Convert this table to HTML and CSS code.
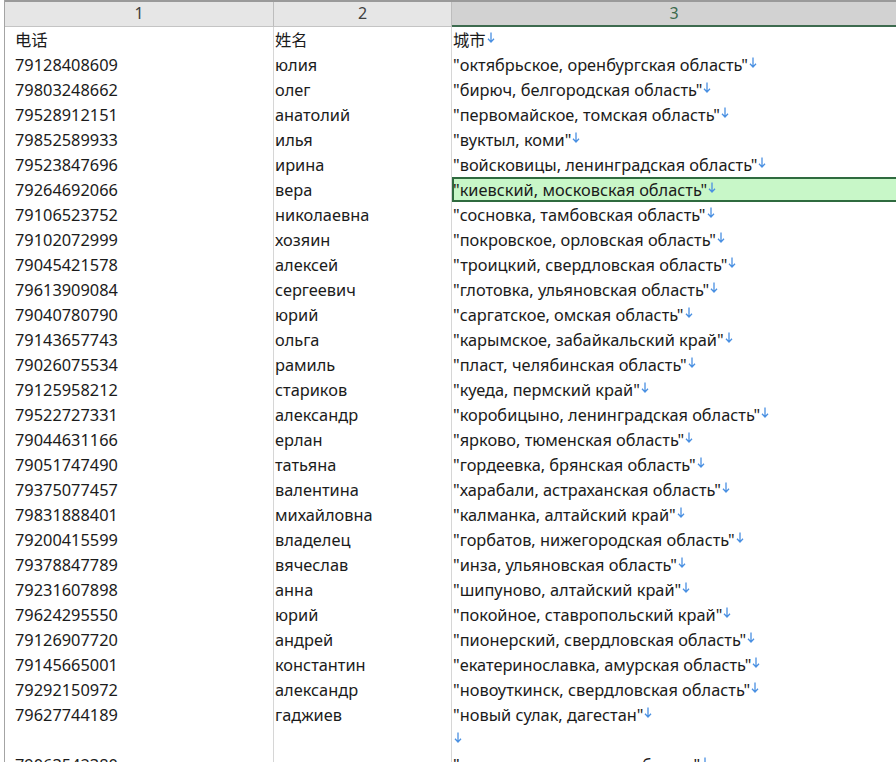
FILE: index.html
```html
<!DOCTYPE html>
<html>
<head>
<meta charset="utf-8">
<link rel="stylesheet" href="styles.css">
</head>
<body>
<div class="sheet">
  <div class="head">
    <div class="hc">1</div>
    <div class="hc">2</div>
    <div class="hc sel">3</div>
  </div>
  <div class="rows" id="rows"></div>
</div>
<script src="app.js"></script>
</body>
</html>
```
FILE: styles.css
```css
html, body {
  margin: 0;
  padding: 0;
  background: #ffffff;
  overflow: hidden;
}
body {
  width: 896px;
  height: 762px;
  font-family: "Noto Sans", "Noto Sans CJK SC", sans-serif;
  font-size: 16.35px;
  color: #1b1b1b;
}
.sheet {
  margin-left: 4px;
  border-left: 1px solid #a4a4a4;
  height: 762px;
}
.head {
  display: grid;
  grid-template-columns: 269px 178px 1fr;
  height: 27px;
  box-sizing: border-box;
  border-top: 2px solid #9a9a9a;
}
.hc {
  background: #e6e6e6;
  border-bottom: 1px solid #c4c4c4;
  border-right: 1px solid #bdbdbd;
  text-align: center;
  line-height: 23px;
  color: #404040;
  font-size: 16px;
}
.hc.sel {
  background: #d2d2d2;
  border-right: none;
  border-bottom: 2px solid #3d6b4f;
  color: #3b6a4c;
}
.row {
  display: grid;
  grid-template-columns: 269px 178px 1fr;
  height: 25px;
}
.c {
  white-space: nowrap;
  overflow: hidden;
  box-sizing: border-box;
  height: 25px;
  padding-top: 1px;
  line-height: 24px;
  padding-left: 1px;
  border-right: 1px solid #d6d6d6;
}
.c1 {
  padding-left: 10px;
}
.c3 {
  border-right: none;
}
.c3.active {
  background: #c8f7c8;
  box-shadow: inset 0 2px 0 #2f6b3f, inset 0 -2px 0 #2f6b3f, inset 2px 0 0 #2f6b3f;
}
.nl {
  width: 8px;
  height: 11px;
  vertical-align: 3px;
  margin-left: 1px;
}
.nl path {
  stroke: #4a90e2;
  stroke-width: 1.3;
  fill: none;
}
```
FILE: app.js
```js
const data = [
  ["电话", "姓名", "城市"],
  ["79128408609", "юлия", "\"октябрьское, оренбургская область\""],
  ["79803248662", "олег", "\"бирюч, белгородская область\""],
  ["79528912151", "анатолий", "\"первомайское, томская область\""],
  ["79852589933", "илья", "\"вуктыл, коми\""],
  ["79523847696", "ирина", "\"войсковицы, ленинградская область\""],
  ["79264692066", "вера", "\"киевский, московская область\""],
  ["79106523752", "николаевна", "\"сосновка, тамбовская область\""],
  ["79102072999", "хозяин", "\"покровское, орловская область\""],
  ["79045421578", "алексей", "\"троицкий, свердловская область\""],
  ["79613909084", "сергеевич", "\"глотовка, ульяновская область\""],
  ["79040780790", "юрий", "\"саргатское, омская область\""],
  ["79143657743", "ольга", "\"карымское, забайкальский край\""],
  ["79026075534", "рамиль", "\"пласт, челябинская область\""],
  ["79125958212", "стариков", "\"куеда, пермский край\""],
  ["79522727331", "александр", "\"коробицыно, ленинградская область\""],
  ["79044631166", "ерлан", "\"ярково, тюменская область\""],
  ["79051747490", "татьяна", "\"гордеевка, брянская область\""],
  ["79375077457", "валентина", "\"харабали, астраханская область\""],
  ["79831888401", "михайловна", "\"калманка, алтайский край\""],
  ["79200415599", "владелец", "\"горбатов, нижегородская область\""],
  ["79378847789", "вячеслав", "\"инза, ульяновская область\""],
  ["79231607898", "анна", "\"шипуново, алтайский край\""],
  ["79624295550", "юрий", "\"покойное, ставропольский край\""],
  ["79126907720", "андрей", "\"пионерский, свердловская область\""],
  ["79145665001", "константин", "\"екатеринославка, амурская область\""],
  ["79292150972", "александр", "\"новоуткинск, свердловская область\""],
  ["79627744189", "гаджиев", "\"новый сулак, дагестан\""],
  ["", "", ""],
  ["79063542380", "", "\"сычевка, смоленская область\""]
];
const arrow = '<svg class="nl" viewBox="0 0 8 11"><path d="M4 0.5V10M1 6.8L4 10L7 6.8"/></svg>';
const rows = document.getElementById('rows');
data.forEach((r, i) => {
  const row = document.createElement('div');
  row.className = 'row';
  const c1 = document.createElement('div');
  c1.className = 'c c1';
  c1.textContent = r[0];
  const c2 = document.createElement('div');
  c2.className = 'c c2';
  c2.textContent = r[1];
  const c3 = document.createElement('div');
  c3.className = 'c c3' + (i === 6 ? ' active' : '');
  const t = document.createElement('span');
  t.textContent = r[2];
  c3.appendChild(t);
  c3.insertAdjacentHTML('beforeend', arrow);
  row.append(c1, c2, c3);
  rows.appendChild(row);
});
```
